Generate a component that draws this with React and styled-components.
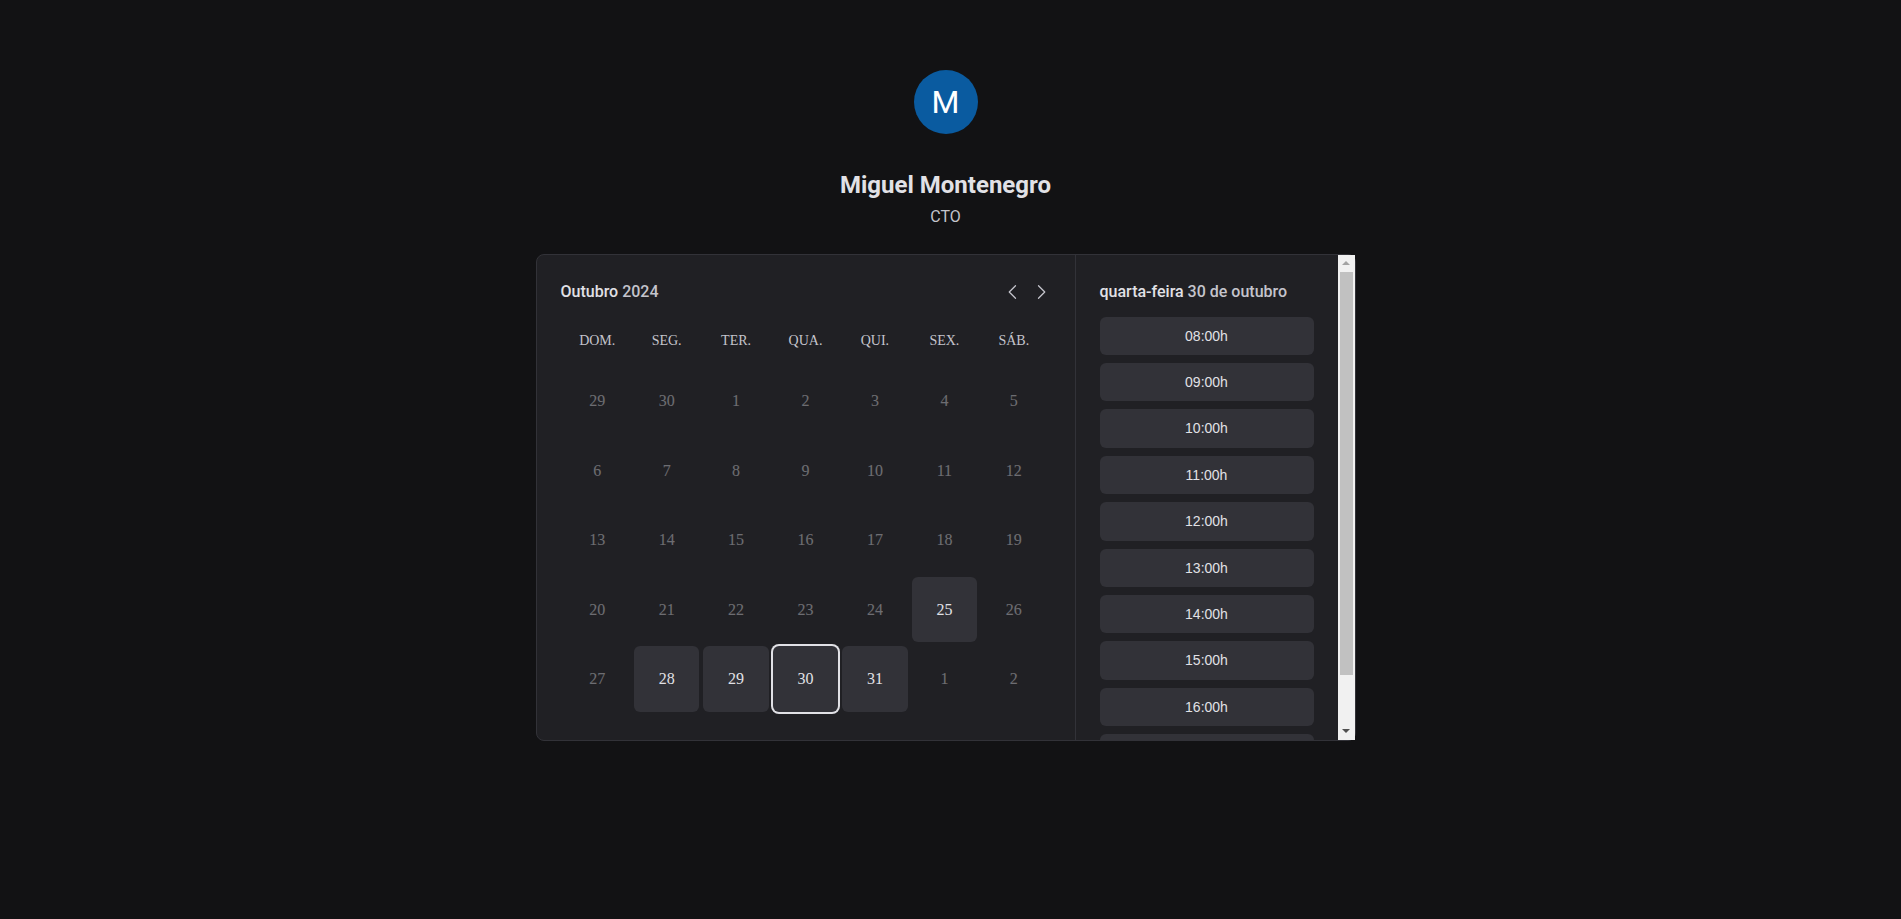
import React from 'react';
import styled, { createGlobalStyle } from 'styled-components';

const GlobalStyle = createGlobalStyle`
  * {
    box-sizing: border-box;
  }
  body {
    margin: 0;
    background: #121214;
    color: #e1e1e6;
    font-family: Roboto, "Liberation Sans", sans-serif;
    -webkit-font-smoothing: antialiased;
  }
`;

const Page = styled.main`
  padding-right: 10px;
`;

const Container = styled.div`
  max-width: 852px;
  padding: 0 16px;
  margin: 70px auto 16px;
`;

const UserHeader = styled.header`
  display: flex;
  flex-direction: column;
  align-items: center;
`;

const Avatar = styled.div`
  width: 64px;
  height: 64px;
  border-radius: 50%;
  background: #0a5ba0;
  color: #fff;
  display: flex;
  align-items: center;
  justify-content: center;
  font-size: 32px;
  font-family: Roboto, sans-serif;
`;

const Name = styled.h1`
  margin: 32px 0 0;
  font-size: 24px;
  font-weight: 700;
  line-height: 1.6;
  color: #e1e1e6;
`;

const Role = styled.p`
  margin: 0;
  font-size: 16px;
  line-height: 1.6;
  color: #c4c4cc;
`;

const Card = styled.section`
  margin-top: 24px;
  display: grid;
  grid-template-columns: 1fr 280px;
  width: 820px;
  background: #202024;
  border: 1px solid #323238;
  border-radius: 8px;
`;

const Calendar = styled.div`
  display: flex;
  flex-direction: column;
  gap: 24px;
  padding: 24px;
`;

const CalendarHeader = styled.div`
  display: flex;
  align-items: center;
  justify-content: space-between;
`;

const Title = styled.p`
  margin: 0;
  font-size: 16px;
  font-weight: 500;
  line-height: 1.6;
  color: #e1e1e6;

  span {
    color: #c4c4cc;
  }
`;

const Actions = styled.div`
  display: flex;
  gap: 8px;
  color: #c4c4cc;
`;

const NavButton = styled.button`
  all: unset;
  cursor: pointer;
  line-height: 0;
  border-radius: 6px;

  svg {
    width: 20px;
    height: 20px;
  }
`;

const CalendarBody = styled.div`
  display: flex;
  flex-direction: column;
`;

const WeekRow = styled.div`
  display: grid;
  grid-template-columns: repeat(7, 1fr);
  column-gap: 4px;
  padding: 5px 4px 0;
`;

const WeekDay = styled.span`
  text-align: center;
  font-family: "Liberation Serif", "Times New Roman", serif;
  font-size: 14px;
  line-height: 14px;
  color: #c4c4cc;
  text-transform: uppercase;
`;

const DayGrid = styled.div`
  display: grid;
  grid-template-columns: repeat(7, 1fr);
  gap: 4px;
  padding: 0 4px 4px;
  margin-top: 21px;
`;

const Day = styled.button`
  aspect-ratio: 1 / 1;
  width: 100%;
  padding: 0;
  border: 0;
  border-radius: 6px;
  background: ${p => (p.disabled ? 'transparent' : '#323238')};
  color: #e1e1e6;
  opacity: ${p => (p.disabled ? 0.4 : 1)};
  font-family: "Liberation Serif", "Times New Roman", serif;
  font-size: 16px;
  cursor: ${p => (p.disabled ? 'default' : 'pointer')};
  box-shadow: ${p => (p.selected ? '0 0 0 2px #e1e1e6' : 'none')};
`;

const TimePicker = styled.aside`
  contain: size;
  display: flex;
  border-left: 1px solid #323238;
`;

const TimeScroll = styled.div`
  flex: 1;
  min-width: 0;
  overflow: hidden;
  padding: 24px 24px 0;
`;

const ScrollBar = styled.div`
  width: 17px;
  flex-shrink: 0;
  display: flex;
  flex-direction: column;
  background: #f1f1f1;
`;

const ScrollArrow = styled.div`
  height: 17px;
  flex-shrink: 0;
  display: flex;
  align-items: center;
  justify-content: center;

  &::before {
    content: '';
    width: 0;
    height: 0;
    border-left: 4px solid transparent;
    border-right: 4px solid transparent;
    ${p =>
      p.down
        ? 'border-top: 4px solid #505050;'
        : 'border-bottom: 4px solid #a3a3a3;'}
  }
`;

const ScrollTrack = styled.div`
  flex: 1;
  padding: 0 2px;
`;

const ScrollThumb = styled.div`
  height: 403px;
  background: #c1c1c1;
`;

const TimeHeader = styled.p`
  margin: 0;
  font-size: 16px;
  font-weight: 500;
  line-height: 1.6;
  color: #e1e1e6;
  white-space: nowrap;

  span {
    color: #c4c4cc;
  }
`;

const TimeList = styled.div`
  display: grid;
  grid-template-columns: 1fr;
  gap: 8px;
  margin-top: 12px;
  padding-bottom: 24px;
`;

const TimeItem = styled.button`
  border: 0;
  border-radius: 6px;
  background: #323238;
  padding: 8px 0;
  color: #e1e1e6;
  font-family: "Liberation Sans", Arial, sans-serif;
  font-size: 14px;
  line-height: 1.6;
  cursor: pointer;
`;

const Caret = ({ dir }) => (
  <svg viewBox="0 0 256 256" fill="none" stroke="currentColor" strokeWidth="16" strokeLinecap="round" strokeLinejoin="round">
    <polyline points={dir === 'left' ? '160 208 80 128 160 48' : '96 48 176 128 96 208'} />
  </svg>
);

const weekDays = ['dom.', 'seg.', 'ter.', 'qua.', 'qui.', 'sex.', 'sáb.'];

const available = [25, 28, 29, 30, 31];

const days = [
  { n: 29, other: true },
  { n: 30, other: true },
  ...Array.from({ length: 31 }, (_, i) => ({ n: i + 1 })),
  { n: 1, other: true },
  { n: 2, other: true }
];

const hours = ['08', '09', '10', '11', '12', '13', '14', '15', '16', '17'];

export default function App() {
  return (
    <>
      <GlobalStyle />
      <Page>
        <Container>
          <UserHeader>
            <Avatar>M</Avatar>
            <Name>Miguel Montenegro</Name>
            <Role>CTO</Role>
          </UserHeader>
          <Card>
            <Calendar>
              <CalendarHeader>
                <Title>
                  Outubro <span>2024</span>
                </Title>
                <Actions>
                  <NavButton title="Mês anterior">
                    <Caret dir="left" />
                  </NavButton>
                  <NavButton title="Próximo mês">
                    <Caret dir="right" />
                  </NavButton>
                </Actions>
              </CalendarHeader>
              <CalendarBody>
                <WeekRow>
                  {weekDays.map(d => (
                    <WeekDay key={d}>{d}</WeekDay>
                  ))}
                </WeekRow>
                <DayGrid>
                  {days.map((d, i) => {
                    const open = !d.other && available.includes(d.n);
                    return (
                      <Day key={i} disabled={!open} selected={open && d.n === 30}>
                        {d.n}
                      </Day>
                    );
                  })}
                </DayGrid>
              </CalendarBody>
            </Calendar>
            <TimePicker>
              <TimeScroll>
                <TimeHeader>
                  quarta-feira <span>30 de outubro</span>
                </TimeHeader>
                <TimeList>
                  {hours.map(h => (
                    <TimeItem key={h}>{h}:00h</TimeItem>
                  ))}
                </TimeList>
              </TimeScroll>
              <ScrollBar>
                <ScrollArrow />
                <ScrollTrack>
                  <ScrollThumb />
                </ScrollTrack>
                <ScrollArrow down />
              </ScrollBar>
            </TimePicker>
          </Card>
        </Container>
      </Page>
    </>
  );
}
